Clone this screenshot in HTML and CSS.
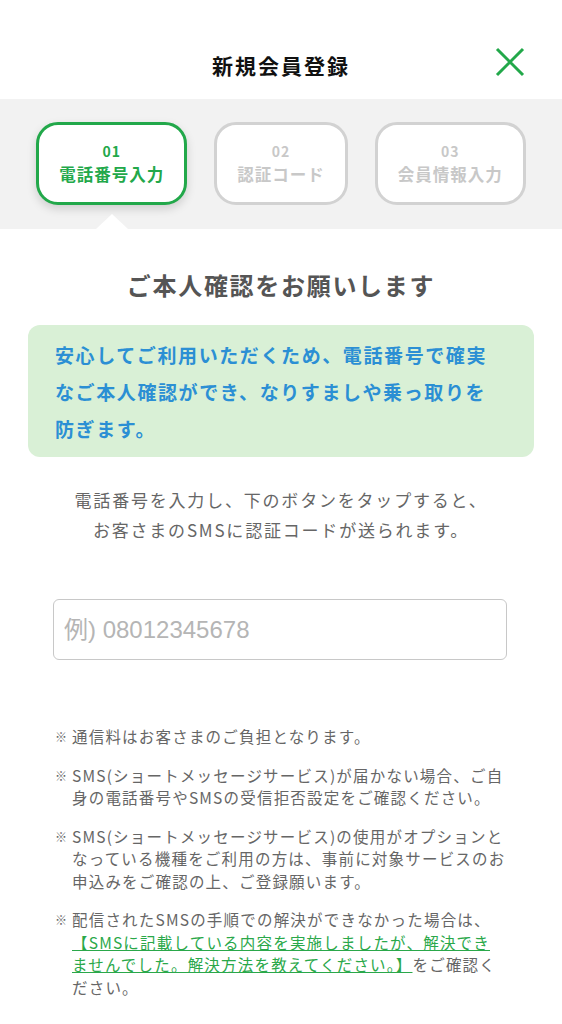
FILE: index.html
```html
<!DOCTYPE html>
<html lang="ja">
<head>
  <meta charset="UTF-8">
  <meta name="viewport" content="width=device-width, initial-scale=1.0">
  <title>新規会員登録</title>
  <link rel="stylesheet" href="styles.css">
</head>
<body>

<header class="header">
  <h1 class="header-title">新規会員登録</h1>
  <button class="close-btn" type="button" aria-label="閉じる">
    <svg width="30" height="30" viewBox="0 0 30 30">
      <path d="M2 2 L28 28 M28 2 L2 28" stroke="#22a84a" stroke-width="3" fill="none"/>
    </svg>
  </button>
</header>

<div class="steps">
  <div class="step step-active">
    <span class="step-num">01</span>
    <span class="step-label">電話番号入力</span>
  </div>
  <div class="step">
    <span class="step-num">02</span>
    <span class="step-label">認証コード</span>
  </div>
  <div class="step">
    <span class="step-num">03</span>
    <span class="step-label">会員情報入力</span>
  </div>
</div>

<main class="content">
  <h2 class="heading">ご本人確認をお願いします</h2>

  <div class="info-box">
    安心してご利用いただくため、電話番号で確実<br>
    なご本人確認ができ、なりすましや乗っ取りを<br>
    防ぎます。
  </div>

  <p class="lead">
    電話番号を入力し、下のボタンをタップすると、<br>
    お客さまのSMSに認証コードが送られます。
  </p>

  <input class="tel-input" type="tel" placeholder="例) 08012345678">

  <ul class="notes">
    <li>通信料はお客さまのご負担となります。</li>
    <li>SMS(ショートメッセージサービス)が届かない場合、ご自<br>身の電話番号やSMSの受信拒否設定をご確認ください。</li>
    <li>SMS(ショートメッセージサービス)の使用がオプションと<br>なっている機種をご利用の方は、事前に対象サービスのお<br>申込みをご確認の上、ご登録願います。</li>
    <li>配信されたSMSの手順での解決ができなかった場合は、<br><a href="#" class="note-link">【SMSに記載している内容を実施しましたが、解決でき<br>ませんでした。解決方法を教えてください。】</a>をご確認く<br>ださい。</li>
  </ul>
</main>

</body>
</html>
```

FILE: styles.css
```css
body {
  margin: 0;
  font-family: "Noto Sans CJK JP", "Noto Sans", sans-serif;
  background-color: #fff;
  color: #555;
}

/* ヘッダー */
.header {
  position: relative;
  height: 69px;
  padding-top: 30px;
  display: flex;
  align-items: center;
  justify-content: center;
}

.header-title {
  margin: 0;
  font-size: 21px;
  font-weight: bold;
  letter-spacing: 2px;
  color: #111;
  line-height: 30px;
}

.close-btn {
  position: absolute;
  right: 37px;
  top: 47px;
  padding: 0;
  border: none;
  background: none;
  width: 30px;
  height: 30px;
  cursor: pointer;
}

/* ステップ */
.steps {
  background-color: #f2f2f2;
  height: 130px;
  box-sizing: border-box;
  padding-top: 23px;
  display: flex;
  justify-content: center;
  align-items: flex-start;
  gap: 27px;
}

.step {
  position: relative;
  height: 83px;
  box-sizing: border-box;
  padding: 0 20px;
  border: 3px solid #d2d2d2;
  border-radius: 22px;
  background-color: #fff;
  display: flex;
  flex-direction: column;
  align-items: center;
  justify-content: center;
  color: #c8c8c8;
  font-weight: bold;
}

.step-active {
  border-color: #22a84a;
  color: #22a84a;
  box-shadow: 0 4px 10px rgba(0, 0, 0, 0.15);
}

.step-active::after {
  content: "";
  position: absolute;
  left: 50%;
  bottom: -27px;
  margin-left: -16px;
  border-left: 16px solid transparent;
  border-right: 16px solid transparent;
  border-bottom: 15px solid #fff;
}

.step-num {
  font-size: 14px;
  line-height: 20px;
  letter-spacing: 1px;
}

.step-label {
  font-size: 16.5px;
  line-height: 26px;
  letter-spacing: 1px;
  white-space: nowrap;
}

/* 本文 */
.content {
  padding: 38px 28px 40px;
}

.heading {
  margin: 0;
  text-align: center;
  font-size: 24px;
  line-height: 36px;
  letter-spacing: 1.7px;
  font-weight: bold;
  color: #555;
}

.info-box {
  margin-top: 22px;
  background-color: #d9f0d6;
  border-radius: 12px;
  padding: 11px 20px 10px 27px;
  color: #2b8fd4;
  font-size: 19px;
  font-weight: bold;
  line-height: 37px;
  letter-spacing: 1.6px;
}

.lead {
  margin: 28px 0 0;
  text-align: center;
  font-size: 17px;
  line-height: 30px;
  letter-spacing: 1.8px;
  color: #666;
}

.tel-input {
  display: block;
  margin: 54px 0 0 25px;
  width: 454px;
  height: 61px;
  box-sizing: border-box;
  border: 1px solid #c8c8c8;
  border-radius: 6px;
  padding: 0 10px;
  font-family: "Liberation Sans", "Noto Sans CJK JP", sans-serif;
  font-size: 24px;
  outline: none;
}

.tel-input::placeholder {
  color: #b5b5b5;
}

.notes {
  list-style: none;
  margin: 65px 0 0 27px;
  padding: 0;
}

.notes li {
  position: relative;
  padding-left: 17px;
  margin-bottom: 16px;
  font-size: 15.5px;
  line-height: 22.5px;
  letter-spacing: 1.2px;
  color: #666;
}

.notes li::before {
  content: "※";
  position: absolute;
  left: 0;
  top: 1px;
  font-size: 12px;
  color: #666;
}

.note-link {
  color: #2aa84a;
  text-decoration: underline;
}
```
